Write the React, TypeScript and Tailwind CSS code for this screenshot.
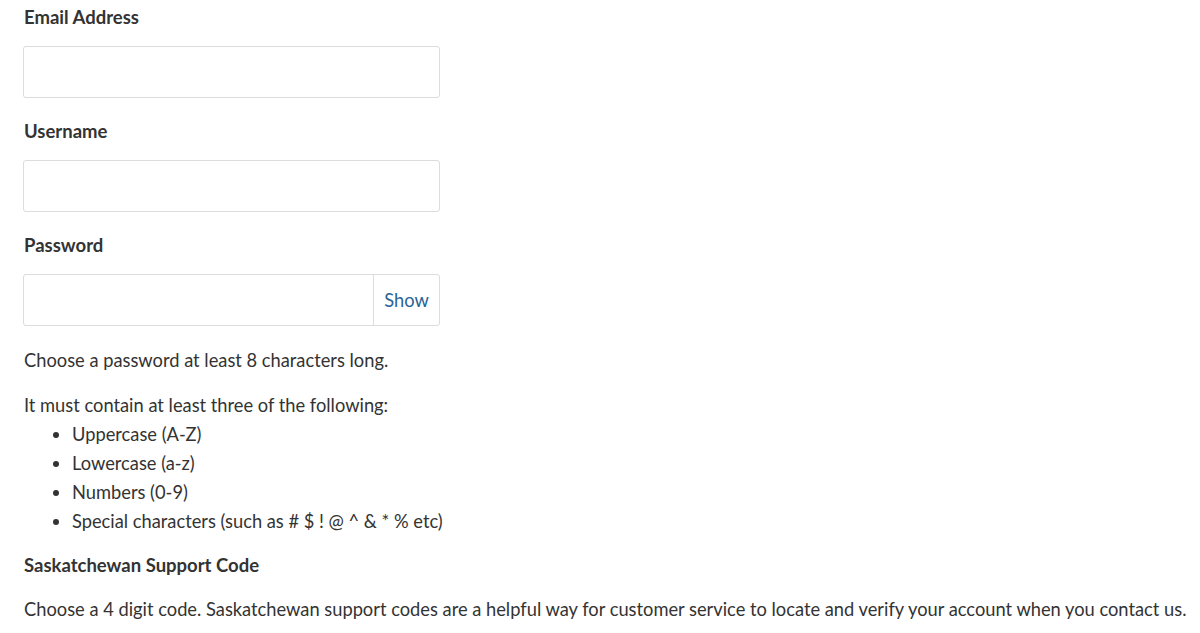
import React from "react";

const font = { fontFamily: "Lato, 'Noto Sans', sans-serif" };

function Field({ label, mt }: { label: string; mt?: boolean }) {
  return (
    <div className={mt ? "mt-[19px]" : ""}>
      <label className="block text-[18.5px] leading-[29px] font-bold text-[#333]">{label}</label>
      <input className="mt-[14px] -ml-[1px] block w-[417px] h-[52px] rounded-[3px] border border-[#dcdcdc] bg-white outline-none" />
    </div>
  );
}

export default function App() {
  return (
    <div className="bg-white w-[1200px] h-[633px] overflow-hidden pl-[24px] pt-[3px] text-[#333]" style={font}>
      <Field label="Email Address" />
      <Field label="Username" mt />
      <div className="mt-[19px]">
        <label className="block text-[18.5px] leading-[29px] font-bold">Password</label>
        <div className="mt-[14px] -ml-[1px] flex w-[417px] h-[52px] rounded-[3px] border border-[#dcdcdc] bg-white">
          <input className="flex-1 min-w-0 outline-none bg-transparent" />
          <button className="w-[66px] border-l border-[#dcdcdc] text-[18.3px] text-[#2a6496] pt-[1px]">Show</button>
        </div>
      </div>
      <p className="mt-[20px] text-[18.3px] leading-[29px]">Choose a password at least 8 characters long.</p>
      <p className="mt-[16px] text-[18.3px] leading-[29px]">It must contain at least three of the following:</p>
      <ul className="text-[18.3px] leading-[29px] list-disc pl-[48px]">
        <li>Uppercase (A-Z)</li>
        <li>Lowercase (a-z)</li>
        <li>Numbers (0-9)</li>
        <li>Special characters (such as # $ ! @ ^ &amp; * % etc)</li>
      </ul>
      <h3 className="mt-[15px] text-[18.5px] leading-[29px] font-bold">Saskatchewan Support Code</h3>
      <p className="mt-[15px] text-[18.3px] leading-[29px] whitespace-nowrap">
        Choose a 4 digit code. Saskatchewan support codes are a helpful way for customer service to locate and verify your account when you contact us.
      </p>
    </div>
  );
}
